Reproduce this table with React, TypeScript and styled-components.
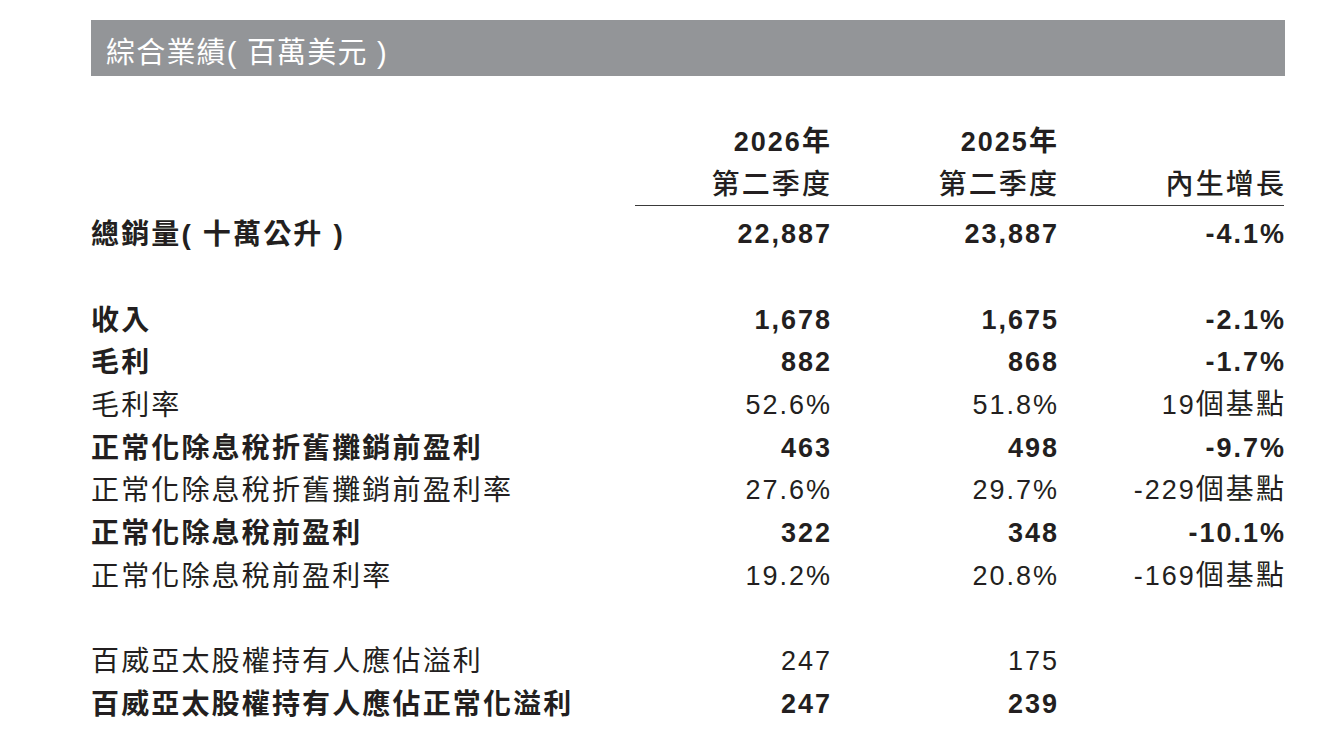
import { Fragment } from "react";
import styled, { createGlobalStyle } from "styled-components";

const INK = "#231f20";
const CJK = `"Liberation Sans", "Noto Sans CJK TC", sans-serif`;

type Row = {
  label?: string;
  bold?: boolean;
  values?: string[];
};

const rows: Row[] = [
  { label: "總銷量( 十萬公升 )", bold: true, values: ["22,887", "23,887", "-4.1%"] },
  {},
  { label: "收入", bold: true, values: ["1,678", "1,675", "-2.1%"] },
  { label: "毛利", bold: true, values: ["882", "868", "-1.7%"] },
  { label: "毛利率", values: ["52.6%", "51.8%", "19個基點"] },
  { label: "正常化除息稅折舊攤銷前盈利", bold: true, values: ["463", "498", "-9.7%"] },
  { label: "正常化除息稅折舊攤銷前盈利率", values: ["27.6%", "29.7%", "-229個基點"] },
  { label: "正常化除息稅前盈利", bold: true, values: ["322", "348", "-10.1%"] },
  { label: "正常化除息稅前盈利率", values: ["19.2%", "20.8%", "-169個基點"] },
  {},
  { label: "百威亞太股權持有人應佔溢利", values: ["247", "175", ""] },
  { label: "百威亞太股權持有人應佔正常化溢利", bold: true, values: ["247", "239", ""] },
];

// digits stay in the latin face, han characters get the bigger cjk size
const splitValue = (value: string) =>
  value.split(/([\u4e00-\u9fff]+)/).filter(Boolean).map((part, i) =>
    /[\u4e00-\u9fff]/.test(part) ? <Unit key={i}>{part}</Unit> : <Fragment key={i}>{part}</Fragment>
  );

const App = () => {
  return (
    <>
      <GlobalStyle />
      <Page>
        <TitleBar>綜合業績( 百萬美元 )</TitleBar>

        {/* COLUMN HEADINGS */}
        <Head>
          <span />
          <HeadCell $strong>
            2026<Unit>年</Unit>
          </HeadCell>
          <HeadCell $strong>
            2025<Unit>年</Unit>
          </HeadCell>
          <span />
          <span />
          <HeadCell>第二季度</HeadCell>
          <HeadCell>第二季度</HeadCell>
          <HeadCell>內生增長</HeadCell>
          <Rule />
        </Head>

        {/* FIGURES */}
        <Body>
          {rows.map((row, i) => (
            <TableRow key={i}>
              <Label $bold={row.bold}>{row.label}</Label>
              {(row.values ?? ["", "", ""]).map((value, j) => (
                <Value key={j} $bold={row.bold}>
                  {splitValue(value)}
                </Value>
              ))}
            </TableRow>
          ))}
        </Body>
      </Page>
    </>
  );
};

export default App;

const GlobalStyle = createGlobalStyle`
  html, body {
    margin: 0;
    background: #ffffff;
  }
  body {
    font-family: ${CJK};
    color: ${INK};
  }
`;

const COLUMNS = "544px 195px 227px 227px";

const Page = styled.div`
  width: 1194px;
  padding: 20px 0 0 91px;
`;

const TitleBar = styled.div`
  box-sizing: border-box;
  height: 56px;
  padding: 11px 0 0 15px;
  background: #939598;
  color: #ffffff;
  font-family: ${CJK};
  font-size: 29px;
  line-height: 44px;
  letter-spacing: 1.2px;
`;

const Head = styled.div`
  display: grid;
  grid-template-columns: ${COLUMNS};
  grid-template-rows: 43px 43px 1px;
  align-items: center;
  margin-top: 42.5px;
`;

const HeadCell = styled.div<{ $strong?: boolean }>`
  justify-self: end;
  margin-right: -2px;
  padding-top: 4px;
  font-family: ${CJK};
  font-size: ${(p) => (p.$strong ? "27px" : "28px")};
  line-height: 32px;
  font-weight: ${(p) => (p.$strong ? 700 : 500)};
  letter-spacing: ${(p) => (p.$strong ? "2px" : "2.1px")};
  white-space: nowrap;
`;

const Rule = styled.div`
  grid-column: 2 / 5;
  align-self: stretch;
  background: #3a3a3a;
`;

const Body = styled.div`
  margin-top: 7.5px;
`;

const TableRow = styled.div`
  display: grid;
  grid-template-columns: ${COLUMNS};
  align-items: center;
  height: 42.67px;
`;

const Label = styled.div<{ $bold?: boolean }>`
  padding-top: 2px;
  font-family: ${CJK};
  font-size: 28px;
  line-height: 32px;
  font-weight: ${(p) => (p.$bold ? 700 : 400)};
  letter-spacing: 2.15px;
  white-space: nowrap;
`;

const Value = styled.div<{ $bold?: boolean }>`
  justify-self: end;
  margin-right: -2px;
  font-family: ${CJK};
  font-size: 27px;
  line-height: 32px;
  font-weight: ${(p) => (p.$bold ? 700 : 400)};
  letter-spacing: 2px;
  white-space: nowrap;
`;

const Unit = styled.span`
  font-family: "Noto Sans CJK TC", sans-serif;
  font-size: 28px;
  line-height: 0;
  letter-spacing: 2.1px;
`;
